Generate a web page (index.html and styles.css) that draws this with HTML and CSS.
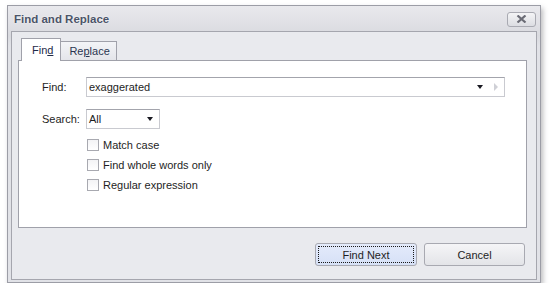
FILE: index.html
```html
<!DOCTYPE html>
<html lang="en">
<head>
    <meta charset="UTF-8">
    <title>Find and Replace</title>
    <link rel="stylesheet" href="styles.css">
</head>
<body>
    <div class="window">
        <div class="titlebar">
            <span class="title">Find and Replace</span>
            <button class="close-btn" aria-label="Close">
                <svg width="11" height="8" viewBox="0 0 11 8"><path d="M1.5 0.5 L9.5 7.5 M9.5 0.5 L1.5 7.5" stroke="#6b6c76" stroke-width="2.2"/></svg>
            </button>
        </div>
        <div class="client">
            <div class="tabs">
                <div class="tab active">Fin<u>d</u></div>
                <div class="tab">Re<u>p</u>lace</div>
            </div>
            <div class="panel">
                <div class="form-row">
                    <label class="field-label">Find:</label>
                    <div class="input find-input">
                        <span class="value">exaggerated</span>
                        <span class="arrow-down"></span>
                        <span class="arrow-right"></span>
                    </div>
                </div>
                <div class="form-row search-row">
                    <label class="field-label">Search:</label>
                    <div class="input combo">
                        <span class="value">All</span>
                        <span class="arrow-down"></span>
                    </div>
                </div>
                <div class="options">
                    <div class="check-row"><span class="checkbox"></span>Match case</div>
                    <div class="check-row"><span class="checkbox"></span>Find whole words only</div>
                    <div class="check-row"><span class="checkbox"></span>Regular expression</div>
                </div>
            </div>
            <div class="buttons">
                <button class="btn default"><span class="focus">Find Next</span></button>
                <button class="btn">Cancel</button>
            </div>
        </div>
    </div>
</body>
</html>
```

FILE: styles.css
```css
* {
    box-sizing: border-box;
}
body {
    margin: 0;
    background-color: #ffffff;
    font-family: 'Liberation Sans', Arial, sans-serif;
    font-size: 11px;
    color: #1e1e1e;
}
.window {
    width: 534px;
    height: 278px;
    margin: 5px 0 0 7px;
    padding: 0 3px 2px;
    border: 1px solid #9c9da6;
    background: linear-gradient(#e9e9ed, #d9dadf 30px, #e1e2e7 40px);
    box-shadow: 2px 3px 5px rgba(60, 60, 70, 0.35);
    display: flex;
    flex-direction: column;
}
.titlebar {
    height: 25px;
    flex: none;
    display: flex;
    align-items: center;
    justify-content: space-between;
    padding: 0 1px 0 3px;
}
.title {
    font-weight: bold;
    font-size: 11.5px;
    color: #4b5468;
    text-shadow: 0 0 2px #ffffff;
    margin-top: 1px;
}
.close-btn {
    width: 29px;
    height: 15px;
    margin-top: 1px;
    padding: 0;
    border: 1px solid #a9aab2;
    border-radius: 3px;
    background: linear-gradient(#f4f4f6, #dcdde2);
    display: flex;
    align-items: center;
    justify-content: center;
}
.client {
    flex: 1;
    border: 1px solid #a5a6ae;
    background-color: #e9eaee;
    padding: 6px 9px 0 6px;
    display: flex;
    flex-direction: column;
}
.tabs {
    display: flex;
    align-items: flex-end;
    height: 22px;
    flex: none;
    padding-left: 3px;
    position: relative;
    z-index: 1;
}
.tab {
    height: 19px;
    padding: 0 6px 0 8px;
    line-height: 18px;
    border: 1px solid #a0a1aa;
    border-bottom: none;
    background: linear-gradient(#f3f4f7, #e4e5ea);
    color: #2a3550;
}
.tab.active {
    height: 23px;
    margin-bottom: -1px;
    padding: 2px 7px 0 10px;
    background: #ffffff;
    color: #1e2a48;
}
.tab + .tab {
    border-left: none;
}
.panel {
    height: 168px;
    flex: none;
    border: 1px solid #a0a1aa;
    background-color: #ffffff;
    padding: 16px 21px 0 23px;
}
.form-row {
    display: flex;
    align-items: center;
}
.search-row {
    margin-top: 12px;
}
.field-label {
    width: 44px;
}
.input {
    height: 20px;
    border: 1px solid #c9cad0;
    border-top-color: #a3a4ac;
    display: flex;
    align-items: center;
    padding: 0 0 0 2px;
}
.find-input {
    flex: 1;
}
.value {
    flex: 1;
}
.combo {
    width: 74px;
}
.arrow-down {
    width: 0;
    height: 0;
    border-left: 3.5px solid transparent;
    border-right: 3.5px solid transparent;
    border-top: 4px solid #1a1a22;
    margin-right: 6px;
}
.arrow-right {
    width: 0;
    height: 0;
    border-top: 4px solid transparent;
    border-bottom: 4px solid transparent;
    border-left: 4px solid #cfd0d6;
    margin: 0 6px 0 5px;
}
.options {
    margin-top: 6px;
    padding-left: 45px;
}
.check-row {
    height: 20px;
    display: flex;
    align-items: center;
}
.checkbox {
    width: 12px;
    height: 12px;
    border: 1px solid #a8a9b0;
    background: linear-gradient(#f3f3f5, #ffffff);
    margin-right: 4px;
}
.buttons {
    display: flex;
    justify-content: flex-end;
    gap: 7px;
    margin-top: 15px;
    padding-right: 2px;
}
.btn {
    width: 101px;
    height: 23px;
    padding: 2px;
    border: 1px solid #a8a9b1;
    border-radius: 3px;
    background: linear-gradient(#f5f5f7, #e3e4e8);
    font-family: 'Liberation Sans', Arial, sans-serif;
    font-size: 11px;
    color: #1e1e1e;
}
.btn.default {
    width: 102px;
    background: linear-gradient(#e4ebfb, #d6e0f6);
}
.focus {
    display: flex;
    align-items: center;
    justify-content: center;
    height: 100%;
    border: 1px dotted #1a1a1a;
}
```
